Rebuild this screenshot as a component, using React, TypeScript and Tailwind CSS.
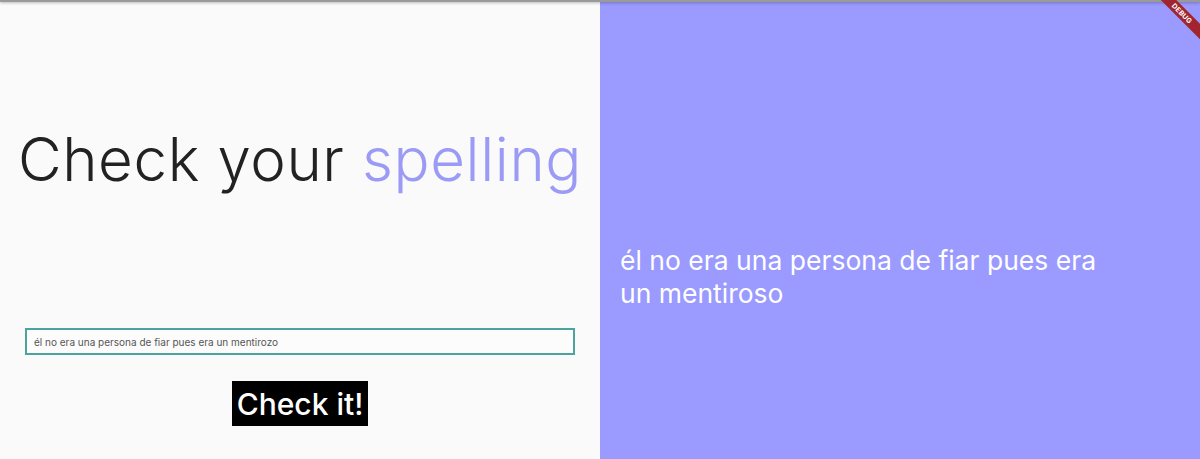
import { useState } from 'react';

const font = { fontFamily: 'Inter, "Noto Sans", sans-serif' };

export default function App() {
  const [text, setText] = useState('él no era una persona de fiar pues era un mentirozo');
  const [checked] = useState('él no era una persona de fiar pues era un mentiroso');

  return (
    <div className="relative flex h-[459px] w-[1200px] overflow-hidden" style={font}>
      {/* top shadow */}
      <div className="absolute left-0 right-0 top-0 h-[2px] bg-[#9a9a9a] shadow-[0_1px_3px_rgba(0,0,0,0.3)]" />

      {/* left panel */}
      <div className="flex w-[600px] flex-col items-center bg-[#fafafa]">
        <h1 className="mt-[123px] text-[60px] font-light leading-[72px] tracking-[0.6px] text-[#222222]">
          Check your <span className="text-[#9b9bf5]">spelling</span>
        </h1>
        <input
          value={text}
          onChange={(e) => setText(e.target.value)}
          className="mt-[133px] h-[27px] w-[550px] border-2 border-[#4ba39d] bg-[#fcfcfc] px-[7px] text-[10px] text-[#555555] outline-none"
        />
        <button className="mt-[26px] h-[45px] bg-black px-[5px] text-[30px] font-medium leading-none text-white">
          Check it!
        </button>
      </div>

      {/* right panel */}
      <div className="flex flex-1 items-center bg-[#9a9aff] pl-[20px] pt-[94px]">
        <p className="w-[495px] text-[26.5px] leading-[33px] text-white">{checked}</p>
      </div>

      {/* debug banner */}
      <div className="absolute right-[-20px] top-[8px] w-[76px] rotate-45 bg-[#a0252f] text-center text-[7px] font-bold leading-[11px] tracking-wide text-white">
        DEBUG
      </div>
    </div>
  );
}
